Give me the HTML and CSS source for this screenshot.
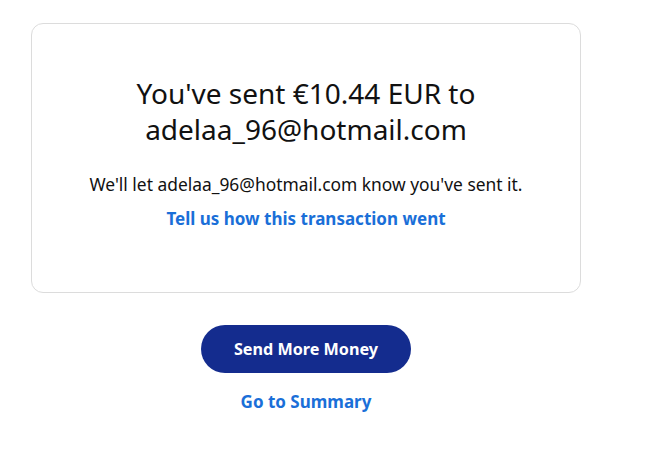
FILE: index.html
```html
<!DOCTYPE html>
<html lang="en">
<head>
    <meta charset="UTF-8">
    <meta name="viewport" content="width=device-width, initial-scale=1.0">
    <title>Payment sent</title>
    <link rel="stylesheet" href="styles.css">
</head>
<body>

    <div class="page">
        <div class="card">
            <h1 class="title">You've sent €10.44 EUR to adelaa_96@hotmail.com</h1>
            <p class="note">We'll let adelaa_96@hotmail.com know you've sent it.</p>
            <a class="link" href="#">Tell us how this transaction went</a>
        </div>

        <div class="actions">
            <button class="button primary">Send More Money</button>
            <a class="link summary" href="#">Go to Summary</a>
        </div>
    </div>

</body>
</html>
```

FILE: styles.css
```css
body {
    margin: 0;
    background-color: #fff;
    font-family: "Noto Sans", "Open Sans", sans-serif;
    color: #111;
}

.page {
    width: 550px;
    margin: 23px 0 0 31px;
}

.card {
    border: 1px solid #dcdcdc;
    border-radius: 12px;
    padding: 51px 40px 61px;
    display: flex;
    flex-direction: column;
    align-items: center;
    text-align: center;
}

.title {
    margin: 0;
    width: 380px;
    font-size: 28px;
    font-weight: 400;
    line-height: 36px;
}

.note {
    margin: 25px 0 0;
    font-size: 17.4px;
    line-height: 24px;
}

.link {
    color: #1a6fd8;
    font-weight: 700;
    font-size: 17px;
    line-height: 24px;
    text-decoration: none;
}

.card .link {
    margin-top: 11px;
}

.actions {
    display: flex;
    flex-direction: column;
    align-items: center;
    margin-top: 32px;
}

.button {
    width: 210px;
    height: 48px;
    border: none;
    border-radius: 24px;
    font-family: inherit;
    font-size: 16.2px;
    font-weight: 700;
    cursor: pointer;
}

.button.primary {
    background-color: #142c8e;
    color: #fff;
}

.summary {
    margin-top: 17px;
}
```
